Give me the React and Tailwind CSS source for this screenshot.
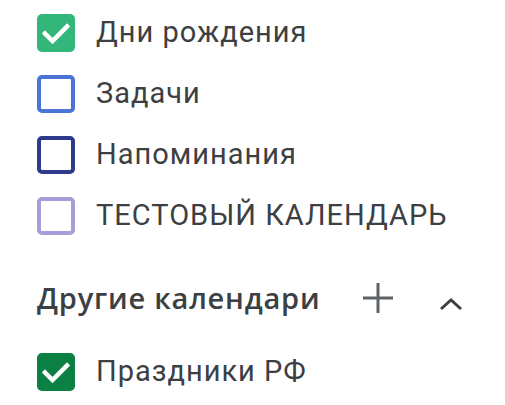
import React from "react";

function Check() {
  return (
    <svg width="38" height="38" viewBox="0 0 38 38" className="block">
      <path d="M8 19.5 L15.5 27 L30 12.5" fill="none" stroke="#ffffff" strokeWidth="4.5" strokeLinecap="square" />
    </svg>
  );
}

function Row({ label, color, checked }) {
  return (
    <div className="flex h-[61px] items-center">
      {checked ? (
        <div className="h-[38px] w-[38px] shrink-0 rounded-[5px]" style={{ backgroundColor: color }}>
          <Check />
        </div>
      ) : (
        <div className="h-[38px] w-[38px] shrink-0 rounded-[5px] border-[4px]" style={{ borderColor: color }} />
      )}
      <span className="ml-[21px] text-[29px] leading-none tracking-[1px] text-[#3c4043]">{label}</span>
    </div>
  );
}

export default function App() {
  return (
    <div className="h-[405px] w-[505px] overflow-hidden bg-white pl-[37px] pt-[2px] font-['Roboto',sans-serif]">
      <Row label="Дни рождения" color="#33b679" checked />
      <Row label="Задачи" color="#4a75d6" />
      <Row label="Напоминания" color="#2e3a8c" />
      <Row label="ТЕСТОВЫЙ КАЛЕНДАРЬ" color="#a99cd8" />
      <div className="mt-[21px] flex h-[61px] items-center">
        <span className="font-['Open_Sans',sans-serif] text-[29px] font-semibold leading-none tracking-[0.8px] text-[#3c4043]">Другие календари</span>
        <svg width="32" height="32" viewBox="0 0 32 32" className="ml-[42px]">
          <path d="M16 1 V31 M1 16 H31" stroke="#5f6368" strokeWidth="3" />
        </svg>
        <svg width="24" height="14" viewBox="0 0 24 14" className="ml-[45px] mt-[12px]">
          <path d="M2 12 L12 3 L22 12" fill="none" stroke="#3c4043" strokeWidth="3" />
        </svg>
      </div>
      <div className="mt-[13px]">
        <Row label="Праздники РФ" color="#0b8043" checked />
      </div>
    </div>
  );
}
